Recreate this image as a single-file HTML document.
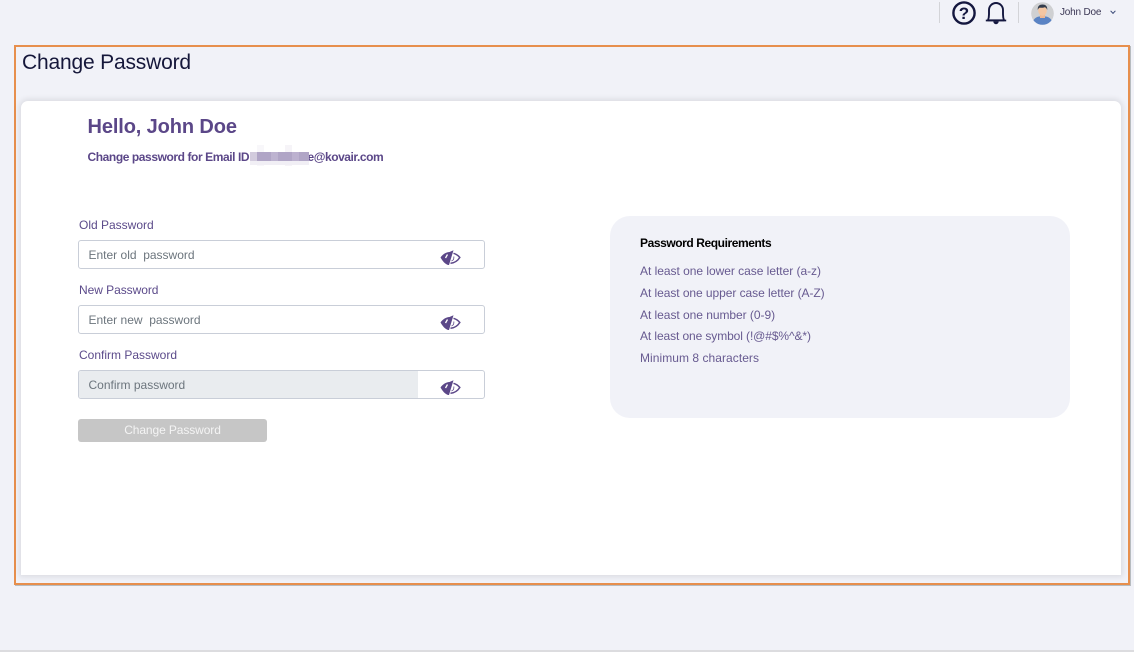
<!DOCTYPE html>
<html><head><meta charset="utf-8"><style>
html,body{margin:0;padding:0}
body{width:1134px;height:652px;background:#f1f2f8;position:relative;overflow:hidden;font-family:"Liberation Sans",sans-serif}
.t{position:absolute;white-space:nowrap}
.abs{position:absolute;box-sizing:border-box}
.lbl{font-size:12px;color:#5b4a8a;line-height:14px;left:79px}
.inp{left:78px;width:407px;height:29px;border:1px solid #c9ced8;border-radius:3px;background:#fff}
.ph{font-size:12px;color:#6c757d;line-height:14px;left:88.5px}
.req{font-size:12px;color:#675a90;line-height:14px;left:640px}
</style></head><body>
<div class="abs" style="left:0;top:650px;width:1134px;height:2px;background:#dcdcdf"></div>
<div class="abs" style="left:939px;top:2px;width:1px;height:21px;background:#d3d4d8"></div>
<div class="abs" style="left:1018px;top:2px;width:1px;height:21px;background:#d3d4d8"></div>
<svg class="abs" style="left:952px;top:1px" width="24" height="24" viewBox="0 0 24 24"><circle cx="12" cy="12" r="10.600" fill="none" stroke="#14173f" stroke-width="2.400"/><text x="12" y="18" text-anchor="middle" font-family="Liberation Sans" font-weight="700" font-size="17" fill="#14173f">?</text></svg>
<svg class="abs" style="left:984px;top:1px" width="24" height="24" viewBox="0 0 24 24"><path d="M4 19.300c.8-2 1-4 1-6V9a7 7 0 0 1 14 0v4.300c0 2 .2 4 1 6z" fill="none" stroke="#14173f" stroke-width="1.900" stroke-linejoin="round"/><path d="M1.800 19.500h20.400" stroke="#14173f" stroke-width="1.800"/><path d="M9.300 20.500a2.700 2.700 0 0 0 5.400 0z" fill="#14173f"/></svg>
<svg class="abs" style="left:1031px;top:2px" width="23" height="23" viewBox="0 0 23 23"><defs><clipPath id="c"><circle cx="11.500" cy="11.500" r="11.300"/></clipPath></defs><circle cx="11.500" cy="11.500" r="11.300" fill="#cfd0d2"/><g clip-path="url(#c)"><path d="M1.500 24c0-6 2-8.500 6.500-9.500h7c4.500 1 6.500 3.500 6.500 9.500z" fill="#5a83c4"/><rect x="9" y="12" width="5" height="4" fill="#eeb893"/><ellipse cx="11.500" cy="8.500" rx="4.300" ry="5.300" fill="#f4c6a2"/><path d="M6.800 8c-.5-4 2-5.500 4.700-5.500S16.700 4 16.200 8c-.6-2-1.500-2.500-2.500-2.800-2 .8-4 .6-5 .4C8 6 7.300 6.500 6.800 8z" fill="#333c4c"/></g></svg>
<span class="t" style="left:1060px;top:6px;font-size:10px;line-height:14px;color:#3a3654;letter-spacing:-.2px">John Doe</span>
<svg class="abs" style="left:1109px;top:9px" width="9" height="7" viewBox="0 0 9 7"><path d="M1.600 1.800 4 4.400 6.400 1.800" fill="none" stroke="#3b4a78" stroke-width="1"/></svg>

<div class="abs" style="left:14px;top:45px;width:1116px;height:540px;border:2px solid #e78f4d;box-shadow:1px 1px 0 #b7bcc0"></div>
<span class="t" style="left:22px;top:50px;font-size:21px;line-height:25px;color:#15173a;letter-spacing:-.18px">Change Password</span>

<div class="abs" style="left:21px;top:101px;width:1100px;height:474px;background:#fff;border-radius:7px 7px 0 0;box-shadow:0 0 6px 2px rgba(0,0,0,.09)"></div>

<span class="t" style="left:87.500px;top:115px;font-size:20px;line-height:25px;font-weight:700;color:#5b4788;letter-spacing:-.12px">Hello, John Doe</span>
<span class="t" style="left:87.500px;top:150px;font-size:12px;line-height:14px;font-weight:700;color:#5b4788;letter-spacing:-.42px">Change password for Email ID</span>
<span class="t" style="left:307.500px;top:150px;font-size:12px;line-height:14px;font-weight:700;color:#5b4788;letter-spacing:-.45px">e@kovair.com</span>
<svg class="abs" style="left:250px;top:145px" width="59" height="24"><rect x="7" y="0" width="7" height="21" fill="#f8f7fa"/><rect x="35" y="0" width="7" height="21" fill="#f6f4f8"/><rect x="0" y="16" width="59" height="4" fill="#f1eff5"/><rect x="0" y="7" width="59" height="9" fill="#b0a5c6"/><rect x="0" y="7" width="7" height="9" fill="#d2cbdd"/><rect x="21" y="7" width="7" height="9" fill="#bdb3d0"/><rect x="42" y="7" width="7" height="9" fill="#bcb1cf"/></svg>

<span class="t lbl" style="top:218px">Old Password</span>
<div class="abs inp" style="top:240px"></div>
<span class="t ph" style="top:248px">Enter old&nbsp; password</span>
<span class="t lbl" style="top:283px;letter-spacing:-.05px">New Password</span>
<div class="abs inp" style="top:305px"></div>
<span class="t ph" style="top:313px">Enter new&nbsp; password</span>
<span class="t lbl" style="top:348px">Confirm Password</span>
<div class="abs inp" style="top:370px"></div>
<div class="abs" style="left:79px;top:371px;width:339px;height:27px;background:#e9ecef;border-radius:2px 0 0 2px"></div>
<span class="t ph" style="top:378px">Confirm password</span>

<svg class="abs" style="left:438.500px;top:249px" width="22" height="18" viewBox="0 0 22 18"><path d="M1.500 8.500C3.500 5.500 7 3 10.500 3L14.500 1.200 10 16H9C6 15 3.500 12 1.500 8.500z" fill="#5b4788"/><path d="M8.500 5.500 6.500 9" stroke="#fff" stroke-width="1.300"/><path d="M14.500 4.300C17 5 19.200 6.500 20.800 8.500 18.500 12 15 14 11.500 14.300" fill="none" stroke="#5b4788" stroke-width="1.500"/><path d="M14.800 7.500C15.200 10 14 11.500 12.500 12" fill="none" stroke="#5b4788" stroke-width=".8"/></svg>
<svg class="abs" style="left:438.500px;top:314px" width="22" height="18" viewBox="0 0 22 18"><path d="M1.500 8.500C3.500 5.500 7 3 10.500 3L14.500 1.200 10 16H9C6 15 3.500 12 1.500 8.500z" fill="#5b4788"/><path d="M8.500 5.500 6.500 9" stroke="#fff" stroke-width="1.300"/><path d="M14.500 4.300C17 5 19.200 6.500 20.800 8.500 18.500 12 15 14 11.500 14.300" fill="none" stroke="#5b4788" stroke-width="1.500"/><path d="M14.800 7.500C15.200 10 14 11.500 12.500 12" fill="none" stroke="#5b4788" stroke-width=".8"/></svg>
<svg class="abs" style="left:438.500px;top:379px" width="22" height="18" viewBox="0 0 22 18"><path d="M1.500 8.500C3.500 5.500 7 3 10.500 3L14.500 1.200 10 16H9C6 15 3.500 12 1.500 8.500z" fill="#5b4788"/><path d="M8.500 5.500 6.500 9" stroke="#fff" stroke-width="1.300"/><path d="M14.500 4.300C17 5 19.200 6.500 20.800 8.500 18.500 12 15 14 11.500 14.300" fill="none" stroke="#5b4788" stroke-width="1.500"/><path d="M14.800 7.500C15.200 10 14 11.500 12.500 12" fill="none" stroke="#5b4788" stroke-width=".8"/></svg>

<div class="abs" style="left:78px;top:419px;width:189px;height:23px;background:#c6c6c6;border-radius:3px"></div>
<span class="t" style="left:78px;width:189px;text-align:center;top:423px;font-size:12px;line-height:14px;color:#f4f4f4;letter-spacing:-.1px">Change Password</span>

<div class="abs" style="left:610px;top:216px;width:460px;height:202px;background:#f1f2f8;border-radius:20px"></div>
<span class="t" style="left:640px;top:236px;font-size:12px;line-height:14px;font-weight:700;color:#000;letter-spacing:-.42px">Password Requirements</span>
<span class="t req" style="top:264px;letter-spacing:-.03px">At least one lower case letter (a-z)</span>
<span class="t req" style="top:286px;letter-spacing:-.06px">At least one upper case letter (A-Z)</span>
<span class="t req" style="top:308px;letter-spacing:-.04px">At least one number (0-9)</span>
<span class="t req" style="top:329px;letter-spacing:-.1px">At least one symbol (!@#$%^&amp;*)</span>
<span class="t req" style="top:351px;letter-spacing:.05px">Minimum 8 characters</span>
</body></html>
